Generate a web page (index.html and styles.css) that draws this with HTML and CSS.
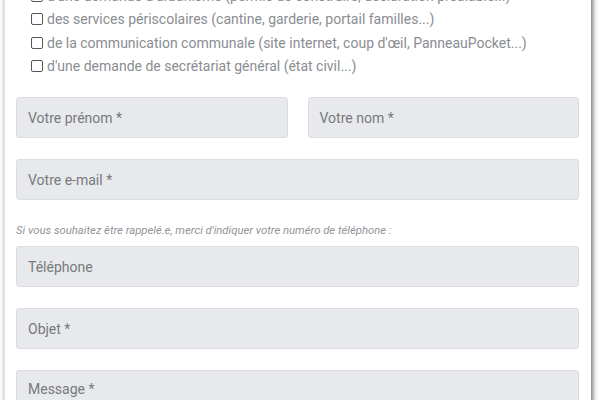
FILE: index.html
```html
<!DOCTYPE html>
<html lang="fr">
<head>
<meta charset="utf-8">
<link rel="stylesheet" href="styles.css">
</head>
<body>
<div class="card">
  <ul class="choices">
    <li><span class="box"></span>d'une demande d'urbanisme (permis de construire, déclaration préalable...)</li>
    <li><span class="box"></span>des services périscolaires (cantine, garderie, portail familles...)</li>
    <li><span class="box"></span>de la communication communale (site internet, coup d'œil, PanneauPocket...)</li>
    <li><span class="box"></span>d'une demande de secrétariat général (état civil...)</li>
  </ul>
  <div class="row two">
    <div class="field">Votre prénom *</div>
    <div class="field">Votre nom *</div>
  </div>
  <div class="row">
    <div class="field">Votre e-mail *</div>
  </div>
  <p class="help">Si vous souhaitez être rappelé.e, merci d'indiquer votre numéro de téléphone :</p>
  <div class="row">
    <div class="field">Téléphone</div>
  </div>
  <div class="row">
    <div class="field">Objet *</div>
  </div>
  <div class="row">
    <div class="field tall">Message *</div>
  </div>
</div>
</body>
</html>
```
FILE: styles.css
```css
html, body {
  margin: 0;
  padding: 0;
  background: #ffffff;
  overflow: hidden;
  height: 400px;
}
body {
  font-family: Roboto, "Liberation Sans", sans-serif;
}
.card {
  margin-left: 4px;
  width: 563px;
  height: 420px;
  padding: 0 12px 0 11px;
  background: #fff;
  border-left: 1px solid #e6e6e6;
  box-shadow: -1px 0 3px rgba(0,0,0,0.08), 2px 0 5px rgba(0,0,0,0.55);
}
.choices {
  list-style: none;
  margin: -16px 0 0 0;
  padding: 0 0 0 15px;
}
.choices li {
  display: flex;
  align-items: center;
  height: 23.5px;
  font-size: 14px;
  color: #8a8d92;
}
.box {
  width: 10px;
  height: 10px;
  border: 1px solid #555;
  border-radius: 2px;
  margin-right: 4px;
  flex: none;
}
.row {
  display: flex;
  gap: 20px;
  margin-top: 21px;
}
.choices + .row {
  margin-top: 19px;
}
.field {
  flex: 1 1 0;
  min-width: 0;
  height: 39px;
  box-sizing: content-box;
  background: #e8e9ec;
  border: 1px solid #dcdde0;
  border-radius: 3px;
  padding: 0 11px;
  display: flex;
  align-items: center;
  font-size: 14px;
  color: #77797d;
}
.field.tall {
  height: 80px;
  align-items: flex-start;
  padding-top: 10px;
}
.help {
  margin: 24px 0 0 0;
  font-size: 11.3px;
  font-style: italic;
  color: #929498;
  line-height: 14px;
}
.help + .row {
  margin-top: 8px;
}
```
